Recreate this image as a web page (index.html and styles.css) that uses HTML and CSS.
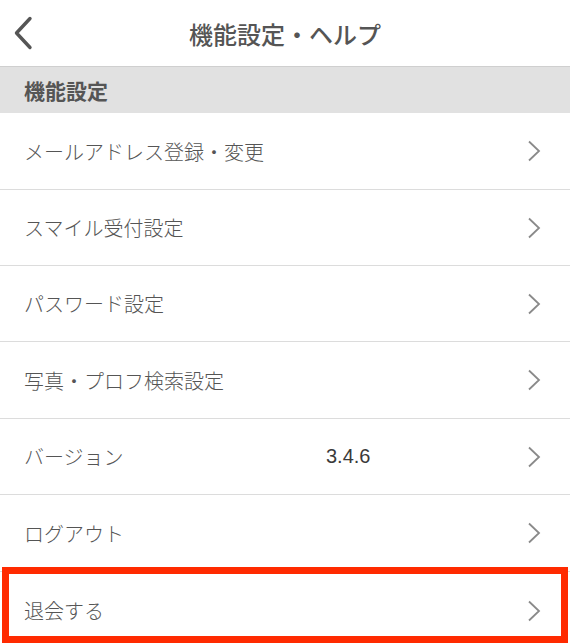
FILE: index.html
```html
<!DOCTYPE html>
<html lang="ja">
<head>
<meta charset="utf-8">
<link rel="stylesheet" href="styles.css">
</head>
<body>
<div class="screen">
  <header class="topbar">
    <svg class="back" width="24" height="34" viewBox="0 0 24 34"><polyline points="19,2.5 5.5,17 19,31.5" fill="none" stroke="#555" stroke-width="3.4" stroke-linecap="round" stroke-linejoin="round"/></svg>
    <h1 class="title">機能設定・ヘルプ</h1>
  </header>
  <div class="section">機能設定</div>
  <ul class="list">
    <li class="row"><span class="label">メールアドレス登録・変更</span><span class="value"></span><svg class="chev" width="14" height="22" viewBox="0 0 14 22"><polyline points="2,1.5 12,11 2,20.5" fill="none" stroke="#8a8a8a" stroke-width="1.8"/></svg></li>
    <li class="row"><span class="label">スマイル受付設定</span><span class="value"></span><svg class="chev" width="14" height="22" viewBox="0 0 14 22"><polyline points="2,1.5 12,11 2,20.5" fill="none" stroke="#8a8a8a" stroke-width="1.8"/></svg></li>
    <li class="row"><span class="label">パスワード設定</span><span class="value"></span><svg class="chev" width="14" height="22" viewBox="0 0 14 22"><polyline points="2,1.5 12,11 2,20.5" fill="none" stroke="#8a8a8a" stroke-width="1.8"/></svg></li>
    <li class="row"><span class="label">写真・プロフ検索設定</span><span class="value"></span><svg class="chev" width="14" height="22" viewBox="0 0 14 22"><polyline points="2,1.5 12,11 2,20.5" fill="none" stroke="#8a8a8a" stroke-width="1.8"/></svg></li>
    <li class="row"><span class="label">バージョン</span><span class="value">3.4.6</span><svg class="chev" width="14" height="22" viewBox="0 0 14 22"><polyline points="2,1.5 12,11 2,20.5" fill="none" stroke="#8a8a8a" stroke-width="1.8"/></svg></li>
    <li class="row"><span class="label">ログアウト</span><span class="value"></span><svg class="chev" width="14" height="22" viewBox="0 0 14 22"><polyline points="2,1.5 12,11 2,20.5" fill="none" stroke="#8a8a8a" stroke-width="1.8"/></svg></li>
    <li class="row last"><span class="label">退会する</span><span class="value"></span><svg class="chev" width="14" height="22" viewBox="0 0 14 22"><polyline points="2,1.5 12,11 2,20.5" fill="none" stroke="#8a8a8a" stroke-width="1.8"/></svg><span class="highlight"></span></li>
  </ul>
</div>
</body>
</html>
```

FILE: styles.css
```css
* { box-sizing: border-box; }
html, body {
  margin: 0;
  padding: 0;
  background: #fff;
}
body {
  font-family: "Noto Sans CJK JP", "Noto Sans", "Liberation Sans", sans-serif;
  color: #5a5a5a;
  width: 570px;
  height: 644px;
  overflow: hidden;
}
.screen {
  width: 570px;
}
.topbar {
  position: relative;
  height: 67px;
  border-bottom: 1px solid #cfcfcf;
  display: flex;
  align-items: center;
  justify-content: center;
}
.back {
  position: absolute;
  left: 11px;
  top: 16px;
}
.title {
  margin: 0;
  font-size: 24px;
  font-weight: 500;
  color: #555;
}
.section {
  height: 46px;
  background: #e1e1e1;
  padding-left: 24px;
  display: flex;
  align-items: center;
  font-size: 21px;
  font-weight: 700;
  color: #555;
}
.list {
  list-style: none;
  margin: 0;
  padding: 0;
}
.row {
  position: relative;
  height: 77px;
  border-bottom: 1px solid #dcdcdc;
  display: grid;
  grid-template-columns: 302px 1fr 14px;
  align-items: center;
  padding: 0 29px 0 24px;
  font-size: 20px;
  font-weight: 300;
}
.row:nth-child(2), .row:nth-child(3), .row:nth-child(5) {
  height: 76px;
}
.row.last {
  border-bottom: none;
}
.label {
  white-space: nowrap;
  color: #555;
}
.value {
  color: #3a3a3a;
  font-family: "Liberation Sans", "Noto Sans", sans-serif;
  font-weight: 400;
  font-size: 20px;
}
.chev {
  display: block;
}
.highlight {
  position: absolute;
  left: 2px;
  right: 2px;
  top: -5px;
  height: 76px;
  border: 7px solid #ff2a00;
  pointer-events: none;
}
```
